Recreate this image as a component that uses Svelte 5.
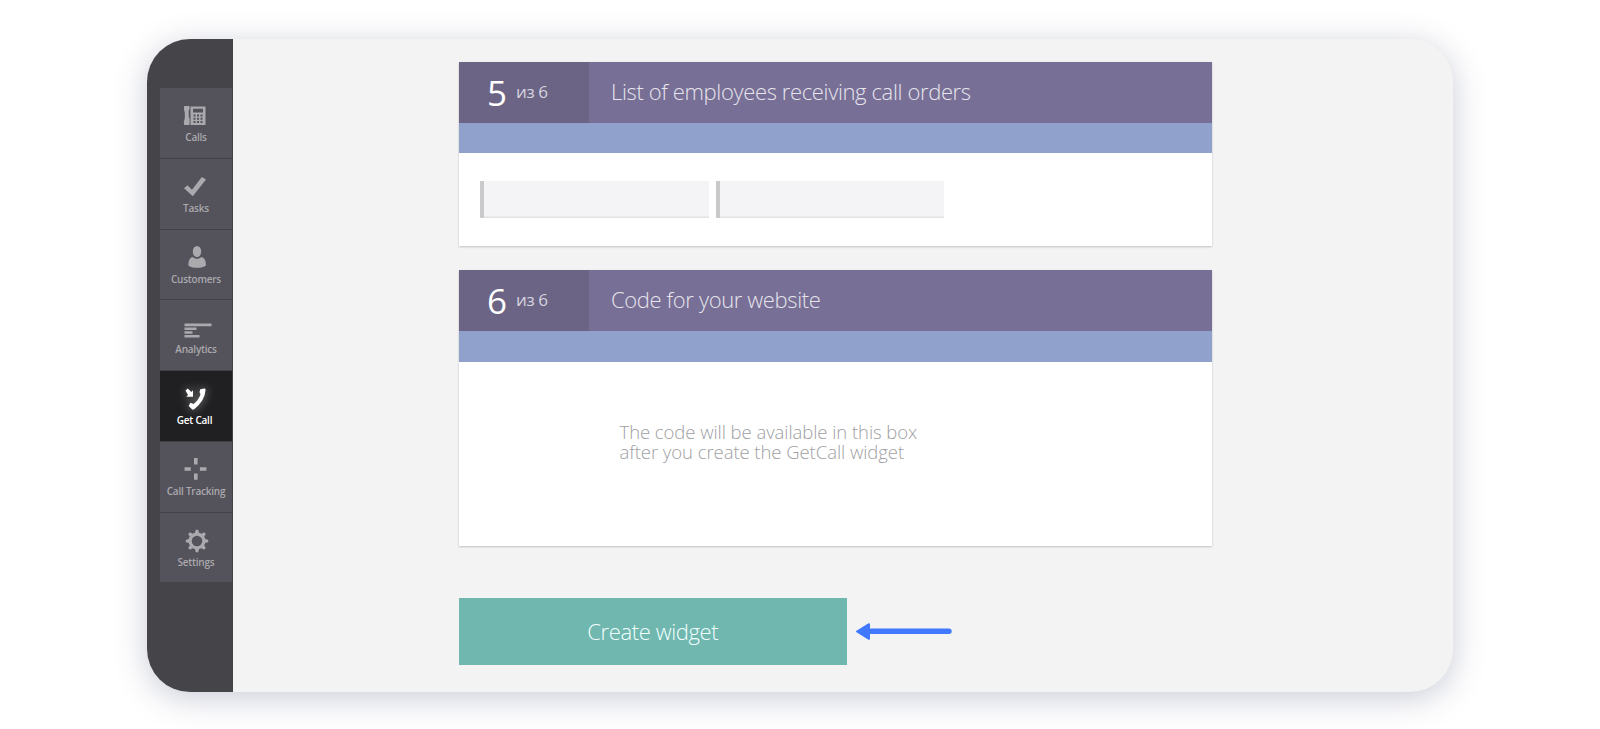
<script>
  const items = ['Calls', 'Tasks', 'Customers', 'Analytics', 'Get Call', 'Call Tracking', 'Settings'];
  const teeth = [0, 45, 90, 135, 180, 225, 270, 315];
</script>

<div class="window">
  <nav>
    {#each items as item}
      <a class="item" class:active={item === 'Get Call'}>
        <svg width="34" height="30" viewBox="0 0 34 30" fill="currentColor">
          {#if item === 'Calls'}
            <path d="M5.200 5h5.200q.8 2.800-.7 4.500v6q1.500 2 .7 8.500H5.200q-1-3.500.6-6.500v-6Q4.200 8 5.200 5z" />
            <path fill-rule="evenodd" d="M11.500 5.500H26.500V24H11.500zM14 7.800v3.700h10V7.800zM14.500 13.500v2h2v-2zm3.500 0v2h2v-2zm3.500 0v2h2v-2zM14.500 16.800v2h2v-2zm3.500 0v2h2v-2zm3.500 0v2h2v-2zM14.500 20.100v2h2v-2zm3.500 0v2h2v-2zm3.500 0v2h2v-2z" />
          {:else if item === 'Tasks'}
            <path d="M5 17.300 8.500 14.300 13 18.700 22.800 6 27 8.600 13.800 25.300z" />
          {:else if item === 'Customers'}
            <ellipse cx="18" cy="9.500" rx="4.200" ry="5.600" />
            <path d="M13.300 15.100q4.700 3.600 9.400 0 4.300 1.400 4.300 8.400-3 2.300-9 2.300t-8.700-2.300q0-7 4-8.400z" />
          {:else if item === 'Analytics'}
            <path d="M5.500 10.500h27v2.700h-27zm0 3.900h12V17h-12zm0 3.800h8v2.600h-8zm0 3.800h15v2.600h-15z" />
          {:else if item === 'Get Call'}
            <path d="m6.500 6.500 2.300-1.900 3.600 3.300L14 6.300v6.500H7.300L9 11z" />
            <path d="m21.300 5.200 4-.6q1.500 0 1.200 1.700-.6 10.600-11.300 18.900-1.400 1-2.500-.1L9.700 21.900l1.700-3.200 3.200 1.200q4.900-3.600 6.900-9.400l-1-2.400z" />
          {:else if item === 'Call Tracking'}
            <path d="M15 4h3.600v6.500H15zm0 15.500h3.600v6.300H15zM5.500 13.200h6.300v3.500H5.500zm15.400 0h6.500v3.500h-6.500z" />
          {:else}
            <g transform="translate(18 16)">
              <circle r="6.900" fill="none" stroke="currentColor" stroke-width="3.200" />
              {#each teeth as angle}
                <path d="M-2.100-7.800-1.300-11.200H1.300L2.100-7.800z" transform="rotate({angle})" />
              {/each}
            </g>
          {/if}
        </svg>
        <span>{item}</span>
      </a>
    {/each}
  </nav>
  <main>
    <section class="first">
      <header>
        <div class="step"><b>5</b><small>из 6</small></div>
        <h2>List of employees receiving call orders</h2>
      </header>
      <div class="band"></div>
      <div class="fields"><div class="field"></div><div class="field"></div></div>
    </section>
    <section class="second">
      <header>
        <div class="step"><b>6</b><small>из 6</small></div>
        <h2>Code for your website</h2>
      </header>
      <div class="band"></div>
      <p>The code will be available in this box<br />after you create the GetCall widget</p>
    </section>
    <div class="actions">
      <button>Create widget</button>
      <svg width="98" height="20" viewBox="0 0 98 20">
        <path d="M16 10.300H94" stroke="#4079ff" stroke-width="5.400" stroke-linecap="round" />
        <path d="M2 10.500 14 3.200v14.600z" fill="#4079ff" stroke="#4079ff" stroke-width="2" stroke-linejoin="round" />
      </svg>
    </div>
  </main>
</div>

<style>
  :global(body) { margin: 0; background: #fff; }
  :global(#app) { display: flow-root; height: 729px; overflow: hidden; }
  .window {
    display: flex;
    box-sizing: border-box;
    width: 1306px;
    height: 653px;
    margin: 38.500px 0 0 147px;
    border-radius: 43px;
    overflow: hidden;
    background: #f3f3f3;
    box-shadow: 0 6px 32px rgba(45, 50, 95, .25);
    font-family: 'Open Sans', sans-serif;
  }
  nav {
    box-sizing: border-box;
    width: 86px;
    flex: none;
    padding: 49.500px 0 0 13px;
    background: #454449;
    border-right: 1px solid #424146;
  }
  .item {
    display: flex;
    flex-direction: column;
    align-items: center;
    box-sizing: border-box;
    height: 70.750px;
    padding-top: 12px;
    background: #54525b;
    border-bottom: 1px solid #424146;
    color: #aaa9ae;
  }
  .item:last-child { border-bottom: 0; height: 69.700px; }
  .item svg { margin-right: 1px; display: block; position: relative; top: .5px; }
  .item span {
    font-size: 10px;
    font-weight: 550;
    line-height: 14px;
    letter-spacing: -.23px;
    white-space: nowrap;
    margin-right: 0;
  }
  .active { background: #202022; color: #fff; }
  .active span { font-weight: 600; margin-right: 3px; }
  .active svg { filter: drop-shadow(0 0 5px rgba(255, 255, 255, .5)); }
  main { padding: 23px 0 0 225.500px; }
  section {
    width: 753.500px;
    background: #fff;
    box-shadow: 0 1px 2px rgba(0, 0, 0, .2);
  }
  .first { height: 184px; }
  .second { height: 275.500px; margin-top: 24.500px; }
  header { display: flex; height: 61px; background: #776f95; color: #e6e4ec; }
  .step {
    display: flex;
    box-sizing: border-box;
    width: 130.500px;
    padding-left: 28.500px;
    background: #6b6485;
  }
  .step b { font-weight: 400; font-size: 35px; line-height: 61px; color: #fff; width: 29px; }
  .step small { font-size: 17px; line-height: 60px; font-weight: 400; color: #d6d3de; letter-spacing: -.4px; }
  h2 {
    margin: 0 0 0 22px;
    font-size: 22px;
    line-height: 58.500px;
    font-weight: 360;
    letter-spacing: -.37px;
    white-space: nowrap;
  }
  .band { height: 30.500px; background: #90a2cb; }
  .fields { display: flex; gap: 7px; padding: 28px 0 0 21.500px; }
  .field {
    box-sizing: border-box;
    width: 228.500px;
    height: 36.500px;
    background: #f4f4f6;
    border-left: 4px solid #c9c9c9;
    box-shadow: inset 0 -1.500px #e2e2e3;
    border-radius: 1px;
  }
  p {
    margin: 0;
    padding: 60px 0 0 161px;
    font-size: 18.500px;
    line-height: 20.700px;
    font-weight: 330;
    letter-spacing: -.06px;
    color: #a0a0a3;
    white-space: nowrap;
  }
  .actions { display: flex; align-items: center; gap: 8px; margin-top: 52px; }
  button {
    width: 388.500px;
    height: 67px;
    padding: 0;
    border: 0;
    background: #6fb7af;
    color: #f2fffd;
    font: 340 22px 'Open Sans', sans-serif;
    letter-spacing: -.4px;
  }
</style>
